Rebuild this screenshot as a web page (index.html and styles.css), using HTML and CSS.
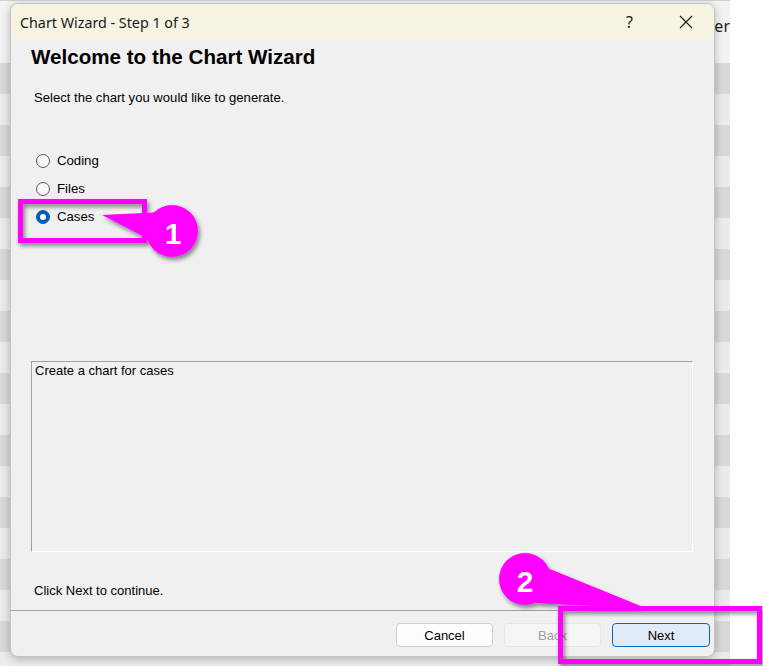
FILE: index.html
```html
<!DOCTYPE html>
<html>
<head>
<meta charset="utf-8">
<link rel="stylesheet" href="styles.css">
</head>
<body>
<div class="desktop">
  <div class="behind">
    <div class="row row-top"><span class="behind-text">fer</span></div>
    <div class="row dark"></div><div class="row light"></div>
    <div class="row dark"></div><div class="row light"></div>
    <div class="row dark"></div><div class="row light"></div>
    <div class="row dark"></div><div class="row light"></div>
    <div class="row dark"></div><div class="row light"></div>
    <div class="row dark"></div><div class="row light"></div>
    <div class="row dark"></div><div class="row light"></div>
    <div class="row dark"></div><div class="row light"></div>
    <div class="row dark"></div><div class="row light"></div>
    <div class="row dark"></div><div class="row light"></div>
  </div>

  <div class="dialog">
    <div class="titlebar">
      <span class="title">Chart Wizard - Step 1 of 3</span>
      <span class="caption-help">?</span>
      <svg class="caption-close" width="14" height="14" viewBox="0 0 14 14"><path d="M1 1 L13 13 M13 1 L1 13" stroke="#1a1a1a" stroke-width="1.1" fill="none"/></svg>
    </div>
    <div class="content">
      <h1 class="heading">Welcome to the Chart Wizard</h1>
      <p class="intro">Select the chart you would like to generate.</p>
      <div class="radios">
        <div class="radio-row"><span class="radio"></span><span class="radio-label">Coding</span></div>
        <div class="radio-row"><span class="radio"></span><span class="radio-label">Files</span></div>
        <div class="radio-row"><span class="radio checked"></span><span class="radio-label">Cases</span></div>
      </div>
      <div class="description">Create a chart for cases</div>
      <p class="hint">Click Next to continue.</p>
    </div>
    <div class="footer">
      <button class="btn">Cancel</button>
      <button class="btn disabled">Back</button>
      <button class="btn primary">Next</button>
    </div>
  </div>

  <svg class="annotations" width="763" height="666" viewBox="0 0 763 666">
    <defs>
      <filter id="shadow" x="-20%" y="-20%" width="140%" height="140%">
        <feDropShadow dx="2" dy="3" stdDeviation="2" flood-color="#000" flood-opacity="0.45"/>
      </filter>
    </defs>
    <g filter="url(#shadow)">
      <rect x="20.5" y="201.5" width="124" height="39" fill="none" stroke="#ff00ff" stroke-width="5"/>
      <polygon points="102,215 165,212 160,245" fill="#ff00ff"/>
      <circle cx="172" cy="231" r="26" fill="#ff00ff"/>
      <text x="173" y="243.5" class="badge-num">1</text>
    </g>
    <g filter="url(#shadow)">
      <polygon points="540,565 648,609 536,603" fill="#ff00ff"/>
      <circle cx="525" cy="579" r="26" fill="#ff00ff"/>
      <text x="525" y="591.5" class="badge-num">2</text>
      <rect x="560.5" y="608.5" width="199" height="53" fill="none" stroke="#ff00ff" stroke-width="5"/>
    </g>
  </svg>
</div>
</body>
</html>
```
FILE: styles.css
```css
* { box-sizing: border-box; }
html, body { margin: 0; padding: 0; }
body {
  width: 763px;
  height: 666px;
  overflow: hidden;
  background: #ffffff;
  font-family: "Liberation Sans", Arial, sans-serif;
}
.desktop {
  position: relative;
  width: 763px;
  height: 666px;
}
.behind {
  width: 730px;
  height: 666px;
  overflow: hidden;
  display: flex;
  flex-direction: column;
}
.row { flex: 0 0 31px; width: 100%; }
.row-top {
  flex: 0 0 63px;
  background: #f3f3f3;
  border-top: 1px solid #d0d0d0;
  display: flex;
  justify-content: flex-end;
  padding-top: 14px;
}
.behind-text {
  font-family: "Noto Sans", sans-serif;
  font-size: 16px;
  color: #1a1a2a;
  margin-right: 0;
}
.dark { background: #d8d8d8; }
.light { background: #ebebeb; }

.dialog {
  position: absolute;
  left: 10px;
  top: 3px;
  width: 705px;
  height: 654px;
  background: #f0f0f0;
  border: 1px solid #c4c4c4;
  border-radius: 8px;
  box-shadow: 0 2px 8px rgba(0,0,0,0.25);
  overflow: hidden;
  display: flex;
  flex-direction: column;
}
.titlebar {
  height: 36px;
  flex: 0 0 36px;
  background: #f6f3e3;
  display: flex;
  align-items: center;
  padding-left: 9px;
  position: relative;
}
.title {
  font-family: "Noto Sans", sans-serif;
  font-size: 14.3px;
  color: #1a1a1a;
  flex: 1;
}
.caption-help {
  font-family: "Noto Sans", sans-serif;
  font-size: 16px;
  color: #1a1a1a;
  margin-right: 46px;
}
.caption-close { margin-right: 21px; }

.content {
  flex: 1;
  display: flex;
  flex-direction: column;
}
.heading {
  margin: 6px 0 0 20px;
  font-size: 20.6px;
  line-height: 22px;
  font-weight: bold;
  color: #000;
}
.intro {
  margin: 22px 0 0 23px;
  font-size: 13.1px;
  line-height: 16px;
  color: #000;
}
.radios {
  margin: 41px 0 0 25px;
  display: flex;
  flex-direction: column;
}
.radio-row {
  height: 28px;
  display: flex;
  align-items: center;
}
.radio {
  width: 14px;
  height: 14px;
  border-radius: 50%;
  border: 1px solid #5a5a5a;
  background: #f7f7f7;
  margin-right: 7px;
  position: relative;
}
.radio.checked {
  background: #005fb8;
  border-color: #005fb8;
}
.radio.checked::after {
  content: "";
  position: absolute;
  left: 3px;
  top: 3px;
  width: 6px;
  height: 6px;
  border-radius: 50%;
  background: #fff;
}
.radio-label {
  font-size: 13.2px;
  line-height: 16px;
  color: #000;
}
.description {
  margin: 130px 0 0 20px;
  width: 662px;
  height: 191px;
  border-top: 1px solid #a0a0a0;
  border-left: 1px solid #a0a0a0;
  border-right: 1px solid #ffffff;
  border-bottom: 1px solid #ffffff;
  padding: 1px 3px;
  font-size: 13px;
  line-height: 16px;
  color: #000;
}
.hint {
  margin: 31px 0 0 23px;
  font-size: 13px;
  line-height: 16px;
  color: #000;
}
.footer {
  flex: 0 0 46px;
  border-top: 1px solid #a0a0a0;
  display: flex;
  justify-content: flex-end;
  align-items: flex-start;
  padding: 12px 4px 0 0;
  gap: 11px;
}
.btn {
  width: 97px;
  height: 24px;
  border: 1px solid #d0d0d0;
  border-radius: 4px;
  background: #fdfdfd;
  font-family: "Liberation Sans", Arial, sans-serif;
  font-size: 13px;
  color: #000;
  padding: 0;
}
.btn.disabled {
  background: #f5f5f5;
  border-color: #e5e5e5;
  color: #a0a0a0;
}
.btn.primary {
  width: 98px;
  background: #e0ecf8;
  border-color: #0067c0;
}
.annotations {
  position: absolute;
  left: 0;
  top: 0;
  pointer-events: none;
}
.badge-num {
  font-family: "Liberation Sans", Arial, sans-serif;
  font-weight: bold;
  font-size: 30px;
  fill: #ffffff;
  text-anchor: middle;
}
```
